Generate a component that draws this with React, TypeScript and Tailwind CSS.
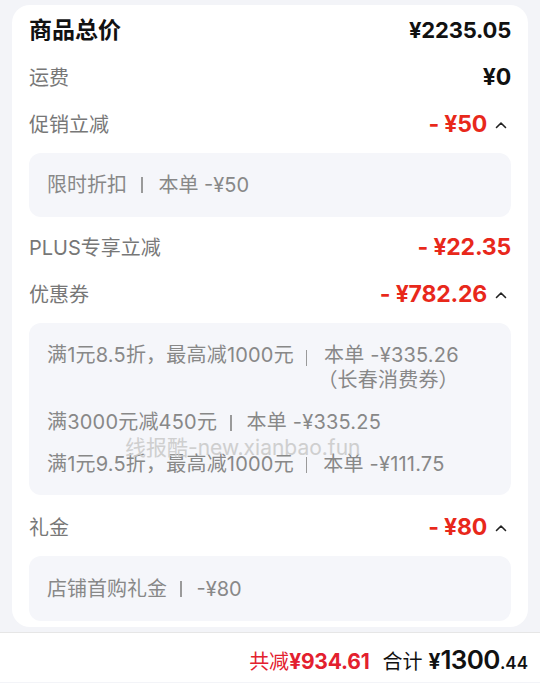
import React from "react";

const FONT = { fontFamily: "Inter, 'Noto Sans CJK SC', sans-serif" };

const Caret = () => (
  <svg width="12" height="8" viewBox="0 0 12 8" className="ml-[8px] mr-[4px]">
    <path d="M1.5 6.5 L6 2 L10.5 6.5" fill="none" stroke="#222" strokeWidth="1.6" strokeLinecap="round" strokeLinejoin="round" />
  </svg>
);

const Sep = ({ cls = "ml-[13px] mr-[15px]" }: { cls?: string }) => (
  <span className={"inline-block h-[16px] w-[1.5px] bg-[#9a9a9a] " + cls} />
);

function Row({ label, value, red, caret, bold }: { label: string; value: string; red?: boolean; caret?: boolean; bold?: boolean }) {
  return (
    <div className="flex h-[47px] items-center justify-between">
      <span className={bold ? "text-[23px] font-bold text-[#111]" : "text-[20px] text-[#777]"}>{label}</span>
      <div className="flex items-center">
        <span className={(bold ? "text-[22px] " : "text-[23px] ") + "font-bold tracking-[-0.2px] " + (red ? "text-[#e8281b]" : "text-[#111]")}>{value}</span>
        {caret && <Caret />}
      </div>
    </div>
  );
}

export default function App() {
  return (
    <div style={FONT} className="relative flex h-[683px] w-[540px] flex-col overflow-hidden bg-[#f3f4f8]">
      <div className="px-[12px] pt-[5px]">
        <div className="rounded-[18px] bg-white px-[17px] pb-[6px] pt-[2px]">
          <Row label="商品总价" value="¥2235.05" bold />
          <Row label="运费" value="¥0" />
          <Row label="促销立减" value="- ¥50" red caret />
          <div className="mb-[7px] mt-[5px] flex h-[64px] items-center rounded-[12px] bg-[#f5f6fa] pl-[18px] text-[20px] text-[#888]">
            <span>限时折扣</span>
            <Sep cls="ml-[14px] mr-[16px]" />
            <span>本单 -¥50</span>
          </div>
          <Row label="PLUS专享立减" value="- ¥22.35" red />
          <Row label="优惠券" value="- ¥782.26" red caret />
          <div className="mb-[9px] mt-[5px] flex flex-col gap-[17px] rounded-[12px] bg-[#f5f6fa] pb-[18px] pl-[18px] pt-[20px] text-[20px] leading-[25px] tracking-[0.2px] text-[#888]">
            <div className="flex items-start">
              <span>满1元8.5折，最高减1000元</span>
              <span className="mt-[4px]"><Sep cls="ml-[12px] mr-[10px]" /></span>
              <span className="text-right">
                本单 -¥335.26
                <br />
                （长春消费券）
              </span>
            </div>
            <div className="flex items-center">
              <span>满3000元减450元</span>
              <Sep />
              <span>本单 -¥335.25</span>
            </div>
            <div className="flex items-center">
              <span>满1元9.5折，最高减1000元</span>
              <Sep cls="ml-[12px] mr-[16px]" />
              <span>本单 -¥111.75</span>
            </div>
          </div>
          <Row label="礼金" value="- ¥80" red caret />
          <div className="mt-[5px] flex h-[65px] items-center rounded-[12px] bg-[#f5f6fa] pl-[18px] text-[20px] text-[#888]">
            <span>店铺首购礼金</span>
            <Sep />
            <span>-¥80</span>
          </div>
        </div>
      </div>
      <div className="mt-[5px] flex h-[50px] items-center justify-end border-t border-[#e6e6e6] bg-white pr-[12px] pt-[3px]">
        <div className="flex items-baseline">
          <span className="text-[20px] text-[#e3202e]">共减</span>
          <span className="text-[21px] font-bold tracking-[-0.2px] text-[#e3202e]">¥934.61</span>
          <span className="ml-[13px] text-[20px] text-[#111]">合计</span>
          <span className="ml-[6px] text-[21px] font-bold text-[#111]">¥</span>
          <span className="text-[26px] font-semibold tracking-[-0.6px] text-[#111]">1300</span>
          <span className="text-[17px] font-semibold text-[#111]">.44</span>
        </div>
      </div>
      <div className="pointer-events-none absolute left-[125px] top-[432px] text-[21px] text-[#cbcbcb] opacity-90">
        线报酷-new.xianbao.fun
      </div>
    </div>
  );
}
